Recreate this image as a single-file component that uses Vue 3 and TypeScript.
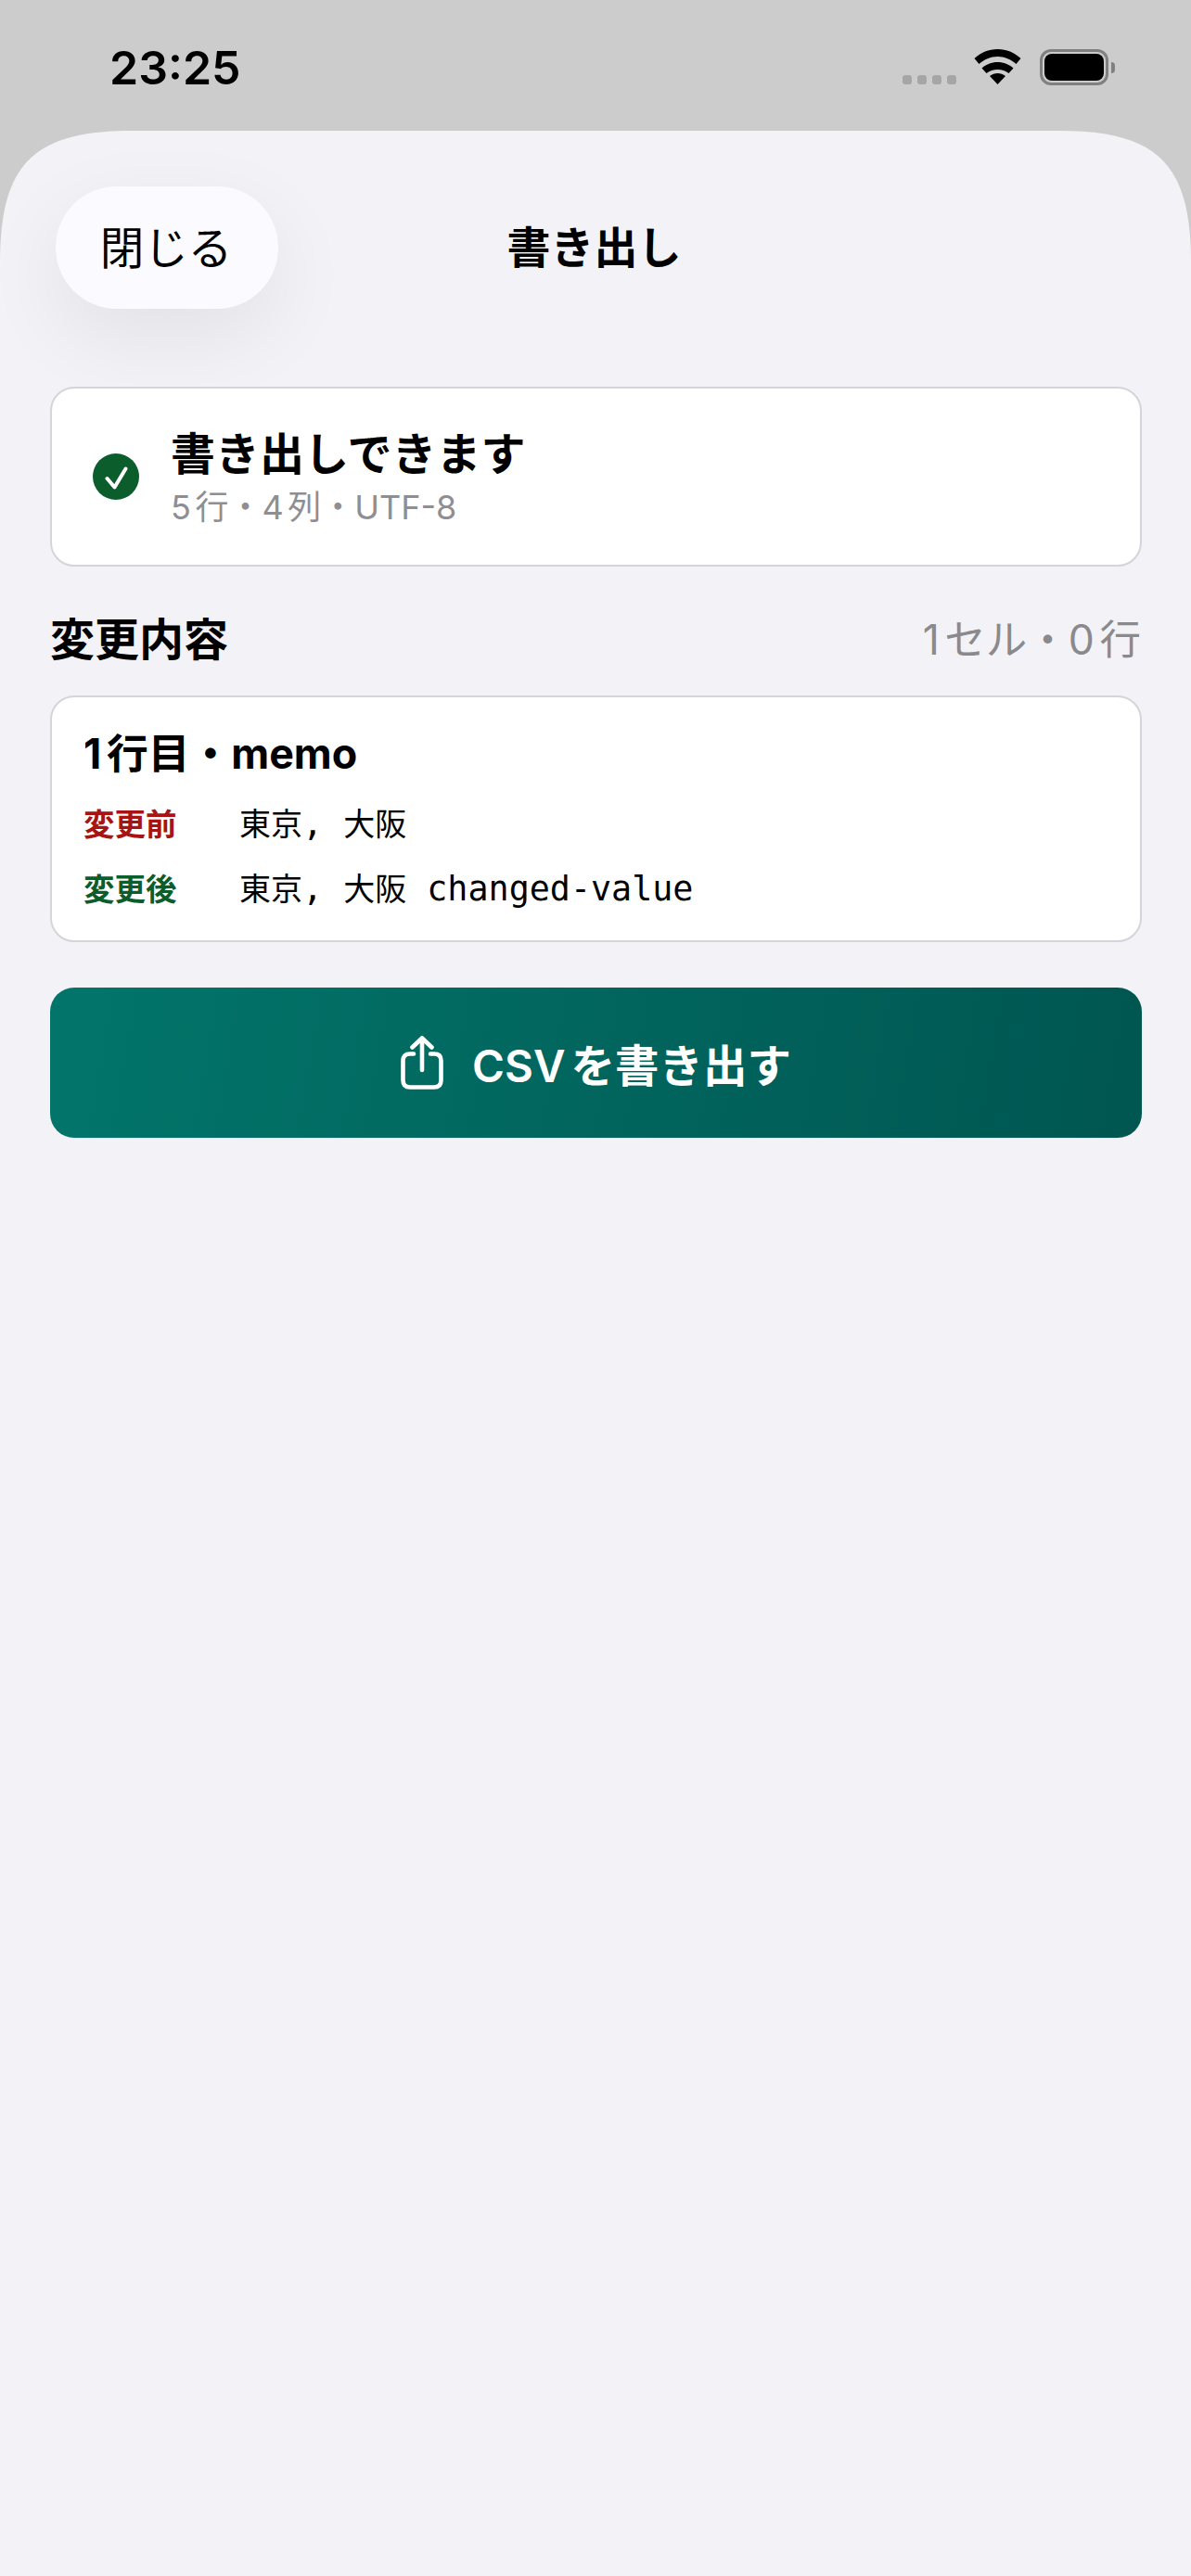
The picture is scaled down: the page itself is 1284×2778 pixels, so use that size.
<script setup lang="ts">
interface Part { text: string; cjk: boolean }
interface DiffRow { label: string; tone: string; parts: Part[] }
const rows: DiffRow[] = [
  {
    label: '変更前',
    tone: 'before',
    parts: [
      { text: '東京', cjk: true },
      { text: ', ', cjk: false },
      { text: '大阪', cjk: true }
    ]
  },
  {
    label: '変更後',
    tone: 'after',
    parts: [
      { text: '東京', cjk: true },
      { text: ', ', cjk: false },
      { text: '大阪', cjk: true },
      { text: ' changed-value', cjk: false }
    ]
  }
]
</script>

<template>
  <div class="screen">
    <header class="status">
      <span class="time">23:25</span>
      <div class="status-icons">
        <div class="signal"><i></i><i></i><i></i><i></i></div>
        <svg class="wifi" width="51" height="38" viewBox="0 0 51 38" fill="#000">
          <path d="M25.5 0C16 0 7.5 3.5 0.5 10L5.5 16C11 11 18 8 25.5 8C33 8 40 11 45.5 16L50.5 10C43.5 3.5 35 0 25.5 0Z"/>
          <path d="M25.5 14C19 14 13 16.5 8.5 20.5L13.5 26C17 23.5 21 22 25.5 22C30 22 34 23.5 37.5 26L42.5 20.5C38 16.5 32 14 25.5 14Z"/>
          <path d="M25.5 26C22.5 26 19.5 27 17 29L25.5 38L34 29C31.5 27 28.5 26 25.5 26Z"/>
        </svg>
        <div class="battery"><div class="battery-body"><div class="battery-fill"></div></div><div class="battery-cap"></div></div>
      </div>
    </header>

    <main class="sheet">
      <div class="nav">
        <button class="close">閉じる</button>
        <h1 class="title">書き出し</h1>
      </div>

      <section class="card status-card">
        <svg class="check" width="50" height="50" viewBox="0 0 50 50">
          <circle cx="25" cy="25" r="25" fill="#0b5d2c"/>
          <path d="M15.5 27L23.5 36.5L35.5 16.5" fill="none" stroke="#fff" stroke-width="4" stroke-linecap="round" stroke-linejoin="round"/>
        </svg>
        <div class="status-text">
          <div class="status-title">書き出しできます</div>
          <div class="status-sub">5行・4列・UTF-8</div>
        </div>
      </section>

      <div class="section-head">
        <h2>変更内容</h2>
        <span>1セル・0行</span>
      </div>

      <section class="card diff-card">
        <div class="diff-title">1行目・memo</div>
        <div v-for="row in rows" :key="row.label" class="diff-row">
          <span class="diff-label" :class="row.tone">{{ row.label }}</span>
          <span class="diff-value"><span v-for="part in row.parts" :key="part.text" :class="{ cjk: part.cjk }">{{ part.text }}</span></span>
        </div>
      </section>

      <button class="export">
        <svg width="46" height="58" viewBox="0 0 46 58" fill="none" stroke="#fff" stroke-width="4.6" stroke-linecap="round" stroke-linejoin="round">
          <path d="M23 37V2.5M12.5 12.5L23 2.5L33.5 12.5"/>
          <path d="M14 19.5H10C5 19.5 2.5 22 2.5 26.5V48C2.5 53 5 55.5 10 55.5H36C41 55.5 43.5 53 43.5 48V26.5C43.5 22 41 19.5 36 19.5H32"/>
        </svg>
        <span>CSVを書き出す</span>
      </button>
    </main>
  </div>
</template>

<style>
html, body { margin: 0; background: #cccccc; }
</style>

<style scoped>
.screen {
  width: 1284px;
  height: 2778px;
  background: #cccccc;
  display: flex;
  flex-direction: column;
  overflow: hidden;
  font-family: Inter, "Noto Sans CJK JP", sans-serif;
  color: #000;
  text-autospace: normal;
}
.status {
  height: 141px;
  flex: none;
  display: flex;
  justify-content: space-between;
  align-items: flex-start;
  padding: 0 82px 0 118px;
  box-sizing: border-box;
}
.time {
  font-weight: 600;
  font-size: 50px;
  line-height: 62px;
  margin-top: 42px;
}
.status-icons { display: flex; align-items: flex-start; margin-top: 53px; }
.signal { display: flex; gap: 6px; margin-top: 28px; margin-right: 19px; }
.signal i { width: 10px; height: 10px; background: #a6a6a6; border-radius: 3px; display: block; }
.wifi { margin-right: 20px; }
.battery { display: flex; align-items: center; }
.battery-body {
  width: 74px;
  height: 39px;
  border: 3.5px solid #808080;
  border-radius: 12px;
  padding: 2px;
  box-sizing: border-box;
}
.battery-fill { width: 100%; height: 100%; background: #000; border-radius: 8px; }
.battery-cap { width: 4px; height: 12px; background: #808080; border-radius: 0 4px 4px 0; margin-left: 3px; }
.sheet {
  flex: 1;
  background: #f2f2f7;
  clip-path: path("M0 2637V142C0 36 36 0 142 0H1142C1248 0 1284 36 1284 142V2637Z");
  padding: 60px 53px 0 54px;
  display: flex;
  flex-direction: column;
}
.nav {
  height: 132px;
  display: grid;
  grid-template-columns: 1fr auto 1fr;
  align-items: center;
}
.close {
  justify-self: start;
  margin-left: 6px;
  width: 240px;
  height: 132px;
  padding: 0 2px 5px 0;
  border: none;
  background: #fbfbff;
  border-radius: 66px;
  font-family: inherit;
  font-size: 47.5px;
  color: #000;
  box-shadow: 0 30px 90px rgba(0, 0, 0, 0.07);
}
.title {
  margin: 0 4px 0 0;
  font-size: 47px;
  font-weight: 600;
  line-height: 56px;
}
.card {
  position: relative;
  background: #fff;
  border: 2px solid #d4d4da;
  border-radius: 26px;
  box-sizing: border-box;
}
.status-card {
  margin-top: 84px;
  height: 194px;
  display: flex;
  align-items: center;
  padding: 0 44px;
  gap: 34px;
}
.status-text { display: flex; flex-direction: column; padding-top: 3px; }
.status-title { font-size: 48px; font-weight: 600; line-height: 56px; }
.status-sub { font-size: 36px; color: #8e8e93; line-height: 44px; margin-top: 7px; }
.section-head {
  margin-top: 45px;
  display: flex;
  justify-content: space-between;
  align-items: center;
  height: 60px;
  padding-right: 1px;
}
.section-head h2 { margin: 0; font-size: 48px; font-weight: 600; }
.section-head span { font-size: 44.5px; color: #8a8a8e; }
.diff-card {
  margin-top: 34px;
  height: 266px;
  padding: 33px 34px 0;
}
.diff-title { font-size: 44.8px; font-weight: 700; line-height: 56px; }
.diff-row { display: flex; align-items: center; height: 70px; }
.diff-title + .diff-row { margin-top: 10px; }
.diff-label { width: 168px; font-size: 33.5px; font-weight: 600; }
.diff-label.before { color: #a81414; }
.diff-label.after { color: #0b5d2c; }
.diff-value { font-family: "DejaVu Sans Mono", monospace; font-size: 36.7px; white-space: pre; text-autospace: no-autospace; }
.cjk { font-family: "Noto Sans CJK JP", sans-serif; font-size: 34px; }
.export {
  margin-top: 49px;
  height: 162px;
  padding: 0;
  border: none;
  border-radius: 26px;
  background: linear-gradient(100deg, #02756a, #005651);
  color: #fff;
  display: flex;
  align-items: center;
  justify-content: center;
  gap: 31px;
  font-family: inherit;
  font-size: 47.5px;
  font-weight: 600;
}
</style>
